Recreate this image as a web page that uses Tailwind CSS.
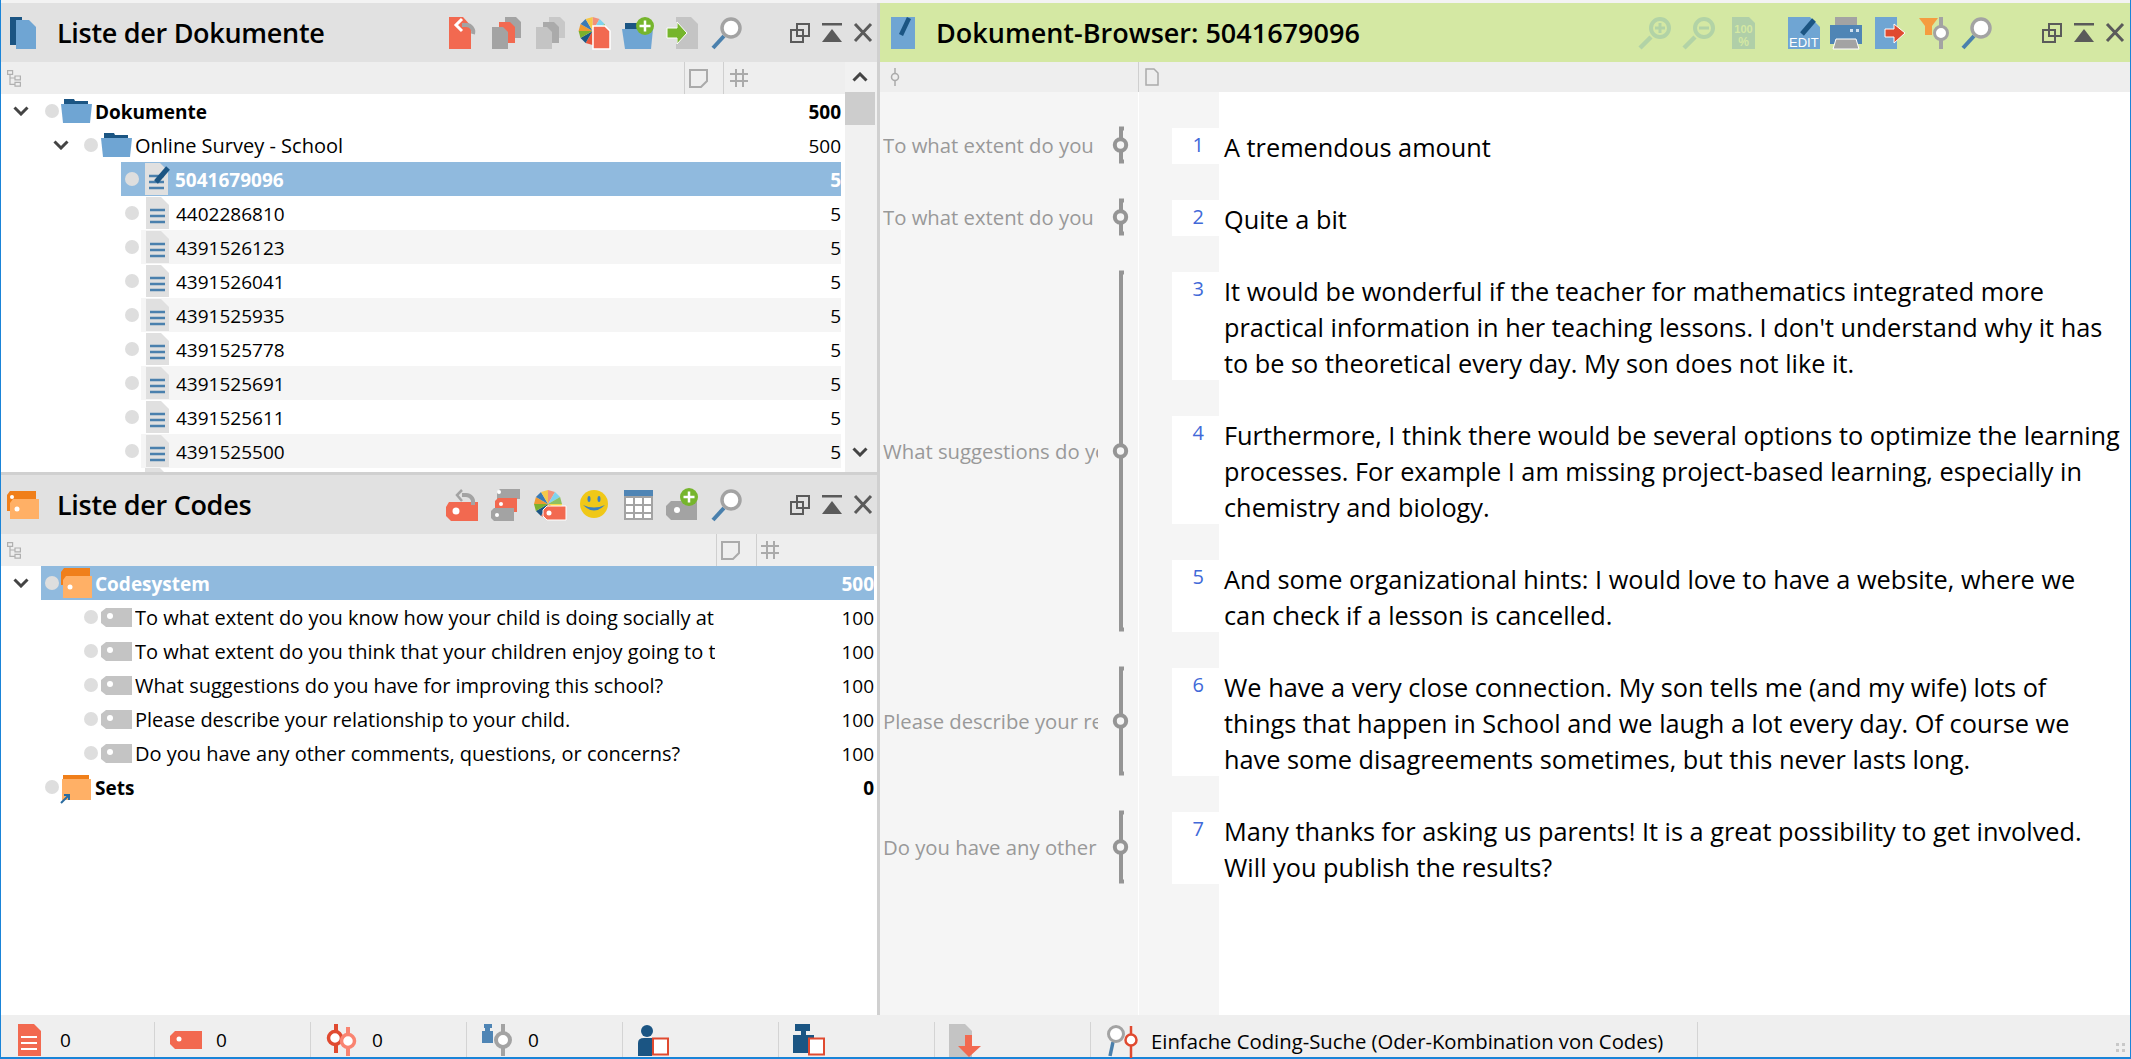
<!DOCTYPE html>
<html lang="de">
<head>
<meta charset="utf-8">
<title>Dokument-Browser</title>
<script src="https://cdn.jsdelivr.net/npm/@tailwindcss/browser@4"></script>
</head>
<body class="overflow-hidden bg-white">

<!-- shared icons -->
<svg class="absolute h-0 w-0">
  <defs>
    <g id="dot"><circle cx="7" cy="7" r="7" fill="#dedede"/></g>
    <g id="pie">
      <polygon points="0,0 0,-14 7,-12.1" fill="#f2907a"/>
      <polygon points="0,0 7,-12.1 12.1,-7" fill="#7fd3ee"/>
      <polygon points="0,0 12.1,-7 14,0" fill="#8fc060"/>
      <polygon points="0,0 14,0 12.1,7" fill="#f5d84a"/>
      <polygon points="0,0 12.1,7 7,12.1" fill="#e8553a"/>
      <polygon points="0,0 7,12.1 0,14" fill="#f5cf20"/>
      <polygon points="0,0 0,14 -7,12.1" fill="#e8553a"/>
      <polygon points="0,0 -7,12.1 -12.1,7" fill="#1b5583"/>
      <polygon points="0,0 -12.1,7 -14,0" fill="#7bb02c"/>
      <polygon points="0,0 -14,0 -12.1,-7" fill="#f09a30"/>
      <polygon points="0,0 -12.1,-7 -7,-12.1" fill="#3a7ab5"/>
      <polygon points="0,0 -7,-12.1 0,-14" fill="#f5c84a"/>
    </g>
    <g id="lens">
      <path d="M12 19 1 31" stroke="#4a80ad" stroke-width="4" fill="none"/>
      <circle cx="19" cy="11" r="9" fill="#fff" stroke="#a3a3a3" stroke-width="3.5"/>
    </g>
    <g id="win-restore" fill="none" stroke="#5a5a5a" stroke-width="2">
      <rect x="7" y="1" width="12" height="12"/>
      <rect x="1" y="7" width="12" height="12" fill="none"/>
    </g>
    <g id="win-up" fill="#5a5a5a">
      <rect x="0" y="0" width="20" height="2.5"/>
      <polygon points="10,6 20,19 0,19"/>
    </g>
    <g id="win-close" stroke="#5a5a5a" stroke-width="3" fill="none">
      <path d="M1 1 17 18M17 1 1 18"/>
    </g>
    <g id="row-chevron">
      <path d="M1.5 1.5 8 8 14.5 1.5" fill="none" stroke="#444" stroke-width="3"/>
    </g>
    <g id="row-folder">
      <path d="M3 0h10l1 2h13v5H3z" fill="#1b5583"/>
      <path d="M0 5h31l-2 19H2z" fill="#6fa5d3"/>
    </g>
    <g id="row-doc">
      <path d="M0 0h15l8 8v24H0z" fill="#e0e0e0"/>
      <path d="M4 13h15M4 19h15M4 25h15" stroke="#4a80ad" stroke-width="2.5"/>
    </g>
    <g id="row-tag">
      <path d="M5 0H31V19H5L0 15V4z" fill="#c4c4c4"/>
      <circle cx="9" cy="8" r="3" fill="#fff"/>
    </g>
    <g id="sub-tree" fill="none" stroke="#b0b0b0" stroke-width="1.2">
      <path d="M.6.6h5v3.800h-5zM8 6h5.400v3.800H8zM8 12.400h5.400v3.800H8zM3 4.400v10h5M3 8h5"/>
    </g>
    <g id="sub-note" fill="none" stroke="#aaa" stroke-width="2">
      <path d="M1 1h17v11l-6 6H1z"/>
    </g>
    <g id="sub-hash" stroke="#aaa" stroke-width="2" fill="none">
      <path d="M6 0v18M13 0v18M0 5h18M0 12h18"/>
    </g>
  </defs>
</svg>

<div class="flex h-[1059px] w-[2131px] flex-col border-x border-b-2 border-[#1a84d8] font-['Open_Sans',sans-serif] text-black">
  <div class="h-[3px] shrink-0 bg-[#f3f3f3]"></div>

  <div class="flex min-h-0 flex-1">
    <!-- left column -->
    <div class="flex w-[876px] shrink-0 flex-col">

      <!-- Liste der Dokumente -->
      <section class="flex h-[469px] shrink-0 flex-col overflow-hidden">
        <header class="flex h-[59px] shrink-0 items-center bg-[#e1e1e1]">
          <svg class="ml-[9px] h-8 w-[26px] shrink-0 overflow-visible">
            <path d="M0 0h12v28H0z" fill="#1b5583"/>
            <path d="M6 3h13l7 7v22H6z" fill="#6fa5d3"/>
          </svg>
          <h1 class="ml-[21px] w-[391px] pt-[2px] text-[27px] font-semibold tracking-[-0.3px]">Liste der Dokumente</h1>
          <div class="flex gap-3">
            <svg class="h-8 w-8 overflow-visible">
              <path d="M1 0h14l8 9v23H1z" fill="#f26950"/>
              <path d="M14 8h4a7 7 0 0 1 7 9" fill="none" stroke="#a3a3a3" stroke-width="4"/>
              <path d="M14 2 8 8l6 6" fill="none" stroke="#fff" stroke-width="3"/>
            </svg>
            <svg class="h-8 w-8 overflow-visible">
              <path d="M13 0h11l5 5v16H13z" fill="#a3a3a3"/>
              <path d="M7 5h11l5 5v16H7z" fill="#f26950"/>
              <path d="M0 10h11l5 5v17H0z" fill="#a3a3a3"/>
            </svg>
            <svg class="h-8 w-8 overflow-visible">
              <path d="M13 0h11l5 5v16H13z" fill="#c8c8c8"/>
              <path d="M7 5h11l5 5v16H7z" fill="#aaa"/>
              <path d="M0 10h11l5 5v17H0z" fill="#c4c4c4"/>
            </svg>
            <svg class="h-8 w-8 overflow-visible">
              <use href="#pie" x="12.6" y="14"/>
              <path d="M13 9h12l5 5v18H13z" fill="#f26950" stroke="#fff" stroke-width="1.5"/>
            </svg>
            <svg class="h-8 w-8 overflow-visible">
              <path d="M1 6h12v6H1z" fill="#1b5583"/>
              <path d="M-2 12h31l-2 20H1z" fill="#6fa5d3"/>
              <circle cx="21" cy="9" r="9" fill="#76b52c"/>
              <path d="M21 3.500v11M15.500 9h11" stroke="#fff" stroke-width="2.500"/>
            </svg>
            <svg class="h-8 w-8 overflow-visible">
              <path d="M8 0h15l7 7v25H8z" fill="#c4c4c4"/>
              <path d="M-1 11h10V5l10 11-10 11v-6H-1z" fill="#76b52c" stroke="#fff" stroke-width="1"/>
            </svg>
            <svg class="h-8 w-8 overflow-visible"><use href="#lens"/></svg>
          </div>
          <div class="ml-[46px] flex gap-3">
            <svg class="h-5 w-5 overflow-visible"><use href="#win-restore"/></svg>
            <svg class="h-5 w-5 overflow-visible"><use href="#win-up"/></svg>
            <svg class="h-5 w-5 overflow-visible"><use href="#win-close"/></svg>
          </div>
        </header>

        <div class="flex min-h-0 flex-1">
          <div class="flex min-w-0 flex-1 flex-col overflow-hidden">
            <div class="flex h-8 shrink-0 bg-[#eeeeee]">
              <div class="flex w-[684px] items-center border-r border-[#cfcfcf] pl-[6px]"><svg class="h-[17px] w-[15px]"><use href="#sub-tree"/></svg></div>
              <div class="flex w-[39px] items-center border-r border-[#cfcfcf] pl-1"><svg class="h-[19px] w-[19px]"><use href="#sub-note"/></svg></div>
              <div class="flex items-center pl-[6px]"><svg class="h-[18px] w-[18px]"><use href="#sub-hash"/></svg></div>
            </div>

            <div class="pr-1 text-[19px]">
              <div class="flex h-[34px] items-center pl-3">
                <svg class="h-[10px] w-4"><use href="#row-chevron"/></svg>
                <svg class="ml-4 h-[14px] w-[14px]"><use href="#dot"/></svg>
                <svg class="ml-[2px] h-6 w-[31px]"><use href="#row-folder"/></svg>
                <span class="ml-[3px] pt-[2px] font-bold">Dokumente</span>
                <span class="ml-auto pt-[2px] font-bold">500</span>
              </div>
              <div class="flex h-[34px] items-center pl-[52px]">
                <svg class="h-[10px] w-4"><use href="#row-chevron"/></svg>
                <svg class="ml-[15px] h-[14px] w-[14px]"><use href="#dot"/></svg>
                <svg class="ml-[3px] h-6 w-[31px]"><use href="#row-folder"/></svg>
                <span class="ml-[3px] pt-[2px] text-[20px]">Online Survey - School</span>
                <span class="ml-auto pt-[2px]">500</span>
              </div>
              <div class="ml-[120px] flex h-[34px] items-center bg-[#90bade] pl-1 font-bold text-white">
                <svg class="h-[14px] w-[14px]"><use href="#dot"/></svg>
                <svg class="ml-[6px] h-8 w-[23px] overflow-visible">
                  <use href="#row-doc"/>
                  <path d="M11 19 23 5" stroke="#1b5583" stroke-width="5"/>
                </svg>
                <span class="ml-[7px] pt-[2px]">5041679096</span>
                <span class="ml-auto pt-[2px]">5</span>
              </div>
              <div class="flex h-[34px] items-center pl-[124px]">
                <svg class="h-[14px] w-[14px]"><use href="#dot"/></svg>
                <div class="ml-[2px] flex h-full flex-1 items-center pl-[5px]"><svg class="h-8 w-[23px]"><use href="#row-doc"/></svg><span class="ml-[7px] pt-[2px]">4402286810</span><span class="ml-auto pt-[2px]">5</span></div>
              </div>
              <div class="flex h-[34px] items-center pl-[124px]">
                <svg class="h-[14px] w-[14px]"><use href="#dot"/></svg>
                <div class="ml-[2px] flex h-full flex-1 items-center bg-[#f5f5f5] pl-[5px]"><svg class="h-8 w-[23px]"><use href="#row-doc"/></svg><span class="ml-[7px] pt-[2px]">4391526123</span><span class="ml-auto pt-[2px]">5</span></div>
              </div>
              <div class="flex h-[34px] items-center pl-[124px]">
                <svg class="h-[14px] w-[14px]"><use href="#dot"/></svg>
                <div class="ml-[2px] flex h-full flex-1 items-center pl-[5px]"><svg class="h-8 w-[23px]"><use href="#row-doc"/></svg><span class="ml-[7px] pt-[2px]">4391526041</span><span class="ml-auto pt-[2px]">5</span></div>
              </div>
              <div class="flex h-[34px] items-center pl-[124px]">
                <svg class="h-[14px] w-[14px]"><use href="#dot"/></svg>
                <div class="ml-[2px] flex h-full flex-1 items-center bg-[#f5f5f5] pl-[5px]"><svg class="h-8 w-[23px]"><use href="#row-doc"/></svg><span class="ml-[7px] pt-[2px]">4391525935</span><span class="ml-auto pt-[2px]">5</span></div>
              </div>
              <div class="flex h-[34px] items-center pl-[124px]">
                <svg class="h-[14px] w-[14px]"><use href="#dot"/></svg>
                <div class="ml-[2px] flex h-full flex-1 items-center pl-[5px]"><svg class="h-8 w-[23px]"><use href="#row-doc"/></svg><span class="ml-[7px] pt-[2px]">4391525778</span><span class="ml-auto pt-[2px]">5</span></div>
              </div>
              <div class="flex h-[34px] items-center pl-[124px]">
                <svg class="h-[14px] w-[14px]"><use href="#dot"/></svg>
                <div class="ml-[2px] flex h-full flex-1 items-center bg-[#f5f5f5] pl-[5px]"><svg class="h-8 w-[23px]"><use href="#row-doc"/></svg><span class="ml-[7px] pt-[2px]">4391525691</span><span class="ml-auto pt-[2px]">5</span></div>
              </div>
              <div class="flex h-[34px] items-center pl-[124px]">
                <svg class="h-[14px] w-[14px]"><use href="#dot"/></svg>
                <div class="ml-[2px] flex h-full flex-1 items-center pl-[5px]"><svg class="h-8 w-[23px]"><use href="#row-doc"/></svg><span class="ml-[7px] pt-[2px]">4391525611</span><span class="ml-auto pt-[2px]">5</span></div>
              </div>
              <div class="flex h-[34px] items-center pl-[124px]">
                <svg class="h-[14px] w-[14px]"><use href="#dot"/></svg>
                <div class="ml-[2px] flex h-full flex-1 items-center bg-[#f5f5f5] pl-[5px]"><svg class="h-8 w-[23px]"><use href="#row-doc"/></svg><span class="ml-[7px] pt-[2px]">4391525500</span><span class="ml-auto pt-[2px]">5</span></div>
              </div>
              <div class="flex h-[34px] pl-[144px]"><svg class="h-8 w-[23px]"><use href="#row-doc"/></svg></div>
            </div>
          </div>

          <!-- scrollbar -->
          <div class="flex w-8 shrink-0 flex-col bg-[#f1f1f1]">
            <div class="flex h-[30px] items-center justify-center pr-[2px]"><svg class="h-[10px] w-4 rotate-180"><use href="#row-chevron"/></svg></div>
            <div class="h-[33px] w-[30px] bg-[#cdcdcd]"></div>
            <div class="mt-auto flex h-[30px] items-center justify-center pb-[10px] pr-[2px]"><svg class="h-[10px] w-4"><use href="#row-chevron"/></svg></div>
          </div>
        </div>
      </section>

      <div class="h-[3px] shrink-0 bg-[#d0d0d0]"></div>

      <!-- Liste der Codes -->
      <section class="flex min-h-0 flex-1 flex-col bg-white">
        <header class="flex h-[59px] shrink-0 items-center bg-[#e1e1e1]">
          <svg class="ml-[6px] h-[28px] w-8 shrink-0 overflow-visible">
            <path d="M3 0h26v20H0V4z" fill="#f07f1a"/>
            <path d="M6 8h26v20H3V12z" fill="#ffb066"/>
            <circle cx="5" cy="6" r="2" fill="#fff"/>
            <circle cx="10" cy="18" r="2.500" fill="#fff"/>
          </svg>
          <h2 class="ml-[18px] w-[391px] pt-[2px] text-[27px] font-semibold tracking-[-0.3px]">Liste der Codes</h2>
          <div class="flex gap-3">
            <svg class="h-8 w-8 overflow-visible">
              <path d="M1 13h29v19H3l-5-5V18z" fill="#f26950"/>
              <circle cx="8" cy="22" r="3.500" fill="#fff"/>
              <path d="M14 6h4a7 7 0 0 1 7 8v2" fill="none" stroke="#a3a3a3" stroke-width="4"/>
              <path d="M14 1 9 6l5 6" fill="none" stroke="#a3a3a3" stroke-width="2.500"/>
            </svg>
            <svg class="h-8 w-8 overflow-visible">
              <path d="M8 0h20v10H5V3z" fill="#a3a3a3"/>
              <path d="M6 9h19v14H3V12z" fill="#f26950"/>
              <circle cx="7" cy="3" r="2" fill="#fff"/>
              <circle cx="9" cy="15" r="2" fill="#fff"/>
              <path d="M2 19h20v13H2l-3-3v-7z" fill="#a3a3a3"/>
              <circle cx="5" cy="26" r="2" fill="#fff"/>
            </svg>
            <svg class="h-8 w-8 overflow-visible">
              <use href="#pie" x="12" y="15"/>
              <path d="M11 17h19v14H11l-4-4v-6z" fill="#f26950" stroke="#fff" stroke-width="1"/>
              <circle cx="13" cy="24" r="2.500" fill="#fff"/>
            </svg>
            <svg class="h-8 w-8 overflow-visible">
              <circle cx="14" cy="15" r="14" fill="#f0c818"/>
              <ellipse cx="9" cy="10" rx="1.500" ry="3" fill="#3a80c0"/>
              <ellipse cx="19" cy="10" rx="1.500" ry="3" fill="#3a80c0"/>
              <path d="M3 16q11 11 22 0-11 5-22 0z" fill="#3a80c0"/>
            </svg>
            <svg class="h-8 w-8 overflow-visible">
              <rect y="1" width="29" height="30" fill="#a3a3a3"/>
              <rect y="1" width="29" height="6" fill="#4f85b5"/>
              <path d="M2 9h7v6H2zM11 9h7v6h-7zM20 9h7v6h-7zM2 17h7v6H2zM11 17h7v6h-7zM20 17h7v6h-7zM2 25h7v4H2zM11 25h7v4h-7zM20 25h7v4h-7z" fill="#fff"/>
            </svg>
            <svg class="h-8 w-8 overflow-visible">
              <path d="M3 12h26v19H3l-5-5v-9z" fill="#a3a3a3"/>
              <circle cx="9" cy="21" r="3" fill="#fff"/>
              <circle cx="21" cy="8" r="9" fill="#76b52c"/>
              <path d="M21 2.500v11M15.500 8h11" stroke="#fff" stroke-width="2.500"/>
            </svg>
            <svg class="h-8 w-8 overflow-visible"><use href="#lens"/></svg>
          </div>
          <div class="ml-[46px] flex gap-3">
            <svg class="h-5 w-5 overflow-visible"><use href="#win-restore"/></svg>
            <svg class="h-5 w-5 overflow-visible"><use href="#win-up"/></svg>
            <svg class="h-5 w-5 overflow-visible"><use href="#win-close"/></svg>
          </div>
        </header>

        <div class="flex h-8 shrink-0 bg-[#eeeeee]">
          <div class="flex w-[716px] items-center border-r border-[#cfcfcf] pl-[6px]"><svg class="h-[17px] w-[15px]"><use href="#sub-tree"/></svg></div>
          <div class="flex w-[40px] items-center border-r border-[#cfcfcf] pl-1"><svg class="h-[19px] w-[19px]"><use href="#sub-note"/></svg></div>
          <div class="flex items-center pl-1"><svg class="h-[18px] w-[18px]"><use href="#sub-hash"/></svg></div>
        </div>

        <div class="pr-[3px] text-[19px]">
          <div class="flex h-[34px] items-center pl-3">
            <svg class="h-[10px] w-4"><use href="#row-chevron"/></svg>
            <div class="ml-3 flex h-full flex-1 items-center bg-[#90bade] pl-1 font-bold text-white">
              <svg class="h-[14px] w-[14px]"><use href="#dot"/></svg>
              <svg class="ml-[2px] h-8 w-[31px] overflow-visible">
                <path d="M3 1h26v17H0V5z" fill="#f07f1a"/>
                <path d="M5 9h26v22H2V13z" fill="#ffb066"/>
                <circle cx="9" cy="20" r="2.500" fill="#fff"/>
              </svg>
              <span class="ml-[3px] pt-[2px]">Codesystem</span>
              <span class="ml-auto pt-[2px]">500</span>
            </div>
          </div>
          <div class="flex h-[34px] items-center pl-[83px]">
            <svg class="h-[14px] w-[14px]"><use href="#dot"/></svg>
            <svg class="ml-[3px] h-[19px] w-[31px]"><use href="#row-tag"/></svg>
            <span class="ml-[3px] w-[580px] overflow-hidden whitespace-nowrap pt-[2px] text-[20px]">To what extent do you know how your child is doing socially at</span>
            <span class="ml-auto pt-[2px]">100</span>
          </div>
          <div class="flex h-[34px] items-center pl-[83px]">
            <svg class="h-[14px] w-[14px]"><use href="#dot"/></svg>
            <svg class="ml-[3px] h-[19px] w-[31px]"><use href="#row-tag"/></svg>
            <span class="ml-[3px] w-[580px] overflow-hidden whitespace-nowrap pt-[2px] text-[20px]">To what extent do you think that your children enjoy going to t</span>
            <span class="ml-auto pt-[2px]">100</span>
          </div>
          <div class="flex h-[34px] items-center pl-[83px]">
            <svg class="h-[14px] w-[14px]"><use href="#dot"/></svg>
            <svg class="ml-[3px] h-[19px] w-[31px]"><use href="#row-tag"/></svg>
            <span class="ml-[3px] w-[580px] overflow-hidden whitespace-nowrap pt-[2px] text-[20px]">What suggestions do you have for improving this school?</span>
            <span class="ml-auto pt-[2px]">100</span>
          </div>
          <div class="flex h-[34px] items-center pl-[83px]">
            <svg class="h-[14px] w-[14px]"><use href="#dot"/></svg>
            <svg class="ml-[3px] h-[19px] w-[31px]"><use href="#row-tag"/></svg>
            <span class="ml-[3px] w-[580px] overflow-hidden whitespace-nowrap pt-[2px] text-[20px]">Please describe your relationship to your child.</span>
            <span class="ml-auto pt-[2px]">100</span>
          </div>
          <div class="flex h-[34px] items-center pl-[83px]">
            <svg class="h-[14px] w-[14px]"><use href="#dot"/></svg>
            <svg class="ml-[3px] h-[19px] w-[31px]"><use href="#row-tag"/></svg>
            <span class="ml-[3px] w-[580px] overflow-hidden whitespace-nowrap pt-[2px] text-[20px]">Do you have any other comments, questions, or concerns?</span>
            <span class="ml-auto pt-[2px]">100</span>
          </div>
          <div class="flex h-[34px] items-center pl-11">
            <svg class="h-[14px] w-[14px]"><use href="#dot"/></svg>
            <svg class="ml-[2px] h-8 w-[31px] overflow-visible">
              <path d="M2 4h26v6H2z" fill="#f07f1a"/>
              <path d="M1 8h29v21H1z" fill="#ffb066"/>
              <path d="M0 32 8 24M3 24h5v5" fill="none" stroke="#2a6ca0" stroke-width="2"/>
            </svg>
            <span class="ml-[3px] pt-[2px] font-bold">Sets</span>
            <span class="ml-auto pt-[2px] font-bold">0</span>
          </div>
        </div>
      </section>
    </div>

    <div class="w-[3px] shrink-0 bg-[#d0d0d0]"></div>

    <!-- Dokument-Browser -->
    <section class="flex min-w-0 flex-1 flex-col">
      <header class="flex h-[59px] shrink-0 items-center bg-[#d4e8a3]">
        <svg class="ml-[11px] h-8 w-6 shrink-0 overflow-visible">
          <path d="M0 0h24v32H0z" fill="#6fa5d3"/>
          <path d="M10 18 18 1" stroke="#1b5583" stroke-width="4.500"/>
        </svg>
        <h2 class="ml-[21px] w-[704px] pt-[2px] text-[27px] font-semibold">Dokument-Browser: 5041679096</h2>
        <div class="flex gap-3">
          <svg class="h-8 w-8 overflow-visible">
            <path d="M11 20 0 31" stroke="#b2d3a6" stroke-width="4.500"/>
            <circle cx="20" cy="11" r="9" fill="#d4e8a3" stroke="#b2d3a6" stroke-width="4"/>
            <path d="M20 6v10M15 11h10" stroke="#b2d3a6" stroke-width="3"/>
          </svg>
          <svg class="h-8 w-8 overflow-visible">
            <path d="M11 20 0 31" stroke="#b2d3a6" stroke-width="4.500"/>
            <circle cx="20" cy="11" r="9" fill="#d4e8a3" stroke="#b2d3a6" stroke-width="4"/>
            <path d="M15 11h10" stroke="#b2d3a6" stroke-width="3"/>
          </svg>
          <svg class="h-8 w-8 overflow-visible">
            <path d="M4 0h17l6 6v26H4z" fill="#b0cfa8"/>
            <text x="15.500" y="16" text-anchor="middle" font-family="Liberation Sans" font-size="11" font-weight="700" fill="#d4e8a3">100</text>
            <text x="15.500" y="29" text-anchor="middle" font-family="Liberation Sans" font-size="12" font-weight="700" fill="#d4e8a3">%</text>
          </svg>
        </div>
        <div class="ml-[26px] flex gap-3">
          <svg class="h-8 w-8 overflow-visible">
            <path d="M2 0h22l10 10v22H2z" fill="#6fa5d3"/>
            <path d="M16 17 28 3" stroke="#1b5583" stroke-width="5"/>
            <text x="3" y="30" font-family="Liberation Sans" font-size="13" fill="#fff">EDIT</text>
          </svg>
          <svg class="h-8 w-8 overflow-visible">
            <rect x="5" width="22" height="8" fill="#a3a3a3"/>
            <rect y="8" width="32" height="19" fill="#4f85b5"/>
            <path d="M20 12h3v3h-3zM26 12h3v3h-3z" fill="#d0e0ee"/>
            <path d="M6 22h20l3 10H3z" fill="#a3a3a3" stroke="#fff" stroke-width="1"/>
          </svg>
          <svg class="h-8 w-8 overflow-visible">
            <rect x="1" width="22" height="32" fill="#6fa5d3"/>
            <path d="M11 12h9V7l11 9-11 10v-6h-9z" fill="#e04a30" stroke="#fff" stroke-width="1"/>
          </svg>
          <svg class="h-8 w-8 overflow-visible">
            <path d="M1 1h19l-6 8v9h-7V9z" fill="#f59c40"/>
            <path d="M23 0v32" stroke="#a3a3a3" stroke-width="4"/>
            <circle cx="23" cy="16" r="6.500" fill="#fff" stroke="#a3a3a3" stroke-width="3"/>
          </svg>
          <svg class="h-8 w-8 overflow-visible"><use href="#lens"/></svg>
        </div>
        <div class="ml-[48px] flex gap-3">
          <svg class="h-5 w-5 overflow-visible"><use href="#win-restore"/></svg>
          <svg class="h-5 w-5 overflow-visible"><use href="#win-up"/></svg>
          <svg class="h-5 w-5 overflow-visible"><use href="#win-close"/></svg>
        </div>
      </header>

      <div class="flex h-[30px] shrink-0 bg-[#eeeeee]">
        <div class="flex w-[259px] items-center justify-start border-r border-[#cfcfcf] pl-[11px]">
          <svg class="h-[18px] w-[8px] overflow-visible" fill="none" stroke="#aaa" stroke-width="1.500"><path d="M4 0v18"/><circle cx="4" cy="9" r="3.500" fill="#eee"/></svg>
        </div>
        <div class="flex items-center pl-[6px]">
          <svg class="h-[18px] w-[14px]" fill="none" stroke="#aaa" stroke-width="1.500"><path d="M1 1h8l4 4v12H1z"/></svg>
        </div>
      </div>

      <div class="flex min-h-0 flex-1">
        <!-- code stripes -->
        <div class="w-[259px] shrink-0 space-y-9 border-r border-white bg-[#f5f5f5] pt-[35px] text-[20.3px] text-[#999999]">
          <div class="flex h-9 items-center justify-between pl-[3px]">
            <span class="w-[215px] overflow-hidden whitespace-nowrap">To what extent do you</span>
            <svg class="mr-1 h-9 w-6 overflow-visible" fill="none" stroke="#959595"><path d="M14 1.500h-3v33h3" stroke-width="4"/><circle cx="10.500" cy="18" r="5.700" fill="#f5f5f5" stroke-width="4"/></svg>
          </div>
          <div class="flex h-9 items-center justify-between pl-[3px]">
            <span class="w-[215px] overflow-hidden whitespace-nowrap">To what extent do you</span>
            <svg class="mr-1 h-9 w-6 overflow-visible" fill="none" stroke="#959595"><path d="M14 1.500h-3v33h3" stroke-width="4"/><circle cx="10.500" cy="18" r="5.700" fill="#f5f5f5" stroke-width="4"/></svg>
          </div>
          <div class="flex h-[360px] items-center justify-between pl-[3px]">
            <span class="w-[215px] overflow-hidden whitespace-nowrap">What suggestions do yo</span>
            <svg class="mr-1 h-[360px] w-6 overflow-visible" fill="none" stroke="#959595"><path d="M14 1.500h-3v357h3" stroke-width="4"/><circle cx="10.500" cy="180" r="5.700" fill="#f5f5f5" stroke-width="4"/></svg>
          </div>
          <div class="flex h-[108px] items-center justify-between pl-[3px]">
            <span class="w-[215px] overflow-hidden whitespace-nowrap">Please describe your re</span>
            <svg class="mr-1 h-[108px] w-6 overflow-visible" fill="none" stroke="#959595"><path d="M14 1.500h-3v105h3" stroke-width="4"/><circle cx="10.500" cy="54" r="5.700" fill="#f5f5f5" stroke-width="4"/></svg>
          </div>
          <div class="flex h-[72px] items-center justify-between pl-[3px]">
            <span class="w-[215px] overflow-hidden whitespace-nowrap">Do you have any other</span>
            <svg class="mr-1 h-[72px] w-6 overflow-visible" fill="none" stroke="#959595"><path d="M14 1.500h-3v69h3" stroke-width="4"/><circle cx="10.500" cy="36" r="5.700" fill="#f5f5f5" stroke-width="4"/></svg>
          </div>
        </div>

        <!-- paragraph numbers -->
        <div class="w-20 shrink-0 space-y-9 bg-[#f5f5f5] pl-[33px] pt-9 text-right text-[20px] leading-[34px] text-[#4169d8]">
          <div class="h-9 bg-white pr-[15px]">1</div>
          <div class="h-9 bg-white pr-[15px]">2</div>
          <div class="h-[108px] bg-white pr-[15px]">3</div>
          <div class="h-[108px] bg-white pr-[15px]">4</div>
          <div class="h-[72px] bg-white pr-[15px]">5</div>
          <div class="h-[108px] bg-white pr-[15px]">6</div>
          <div class="h-[72px] bg-white pr-[15px]">7</div>
        </div>

        <!-- text -->
        <div class="min-w-0 flex-1 space-y-9 bg-white pl-[5px] pt-[37px] text-[25.3px] leading-[36px] whitespace-nowrap">
          <p>A tremendous amount</p>
          <p>Quite a bit</p>
          <p>It would be wonderful if the teacher for mathematics integrated more<br>practical information in her teaching lessons. I don't understand why it has<br>to be so theoretical every day. My son does not like it.</p>
          <p>Furthermore, I think there would be several options to optimize the learning<br>processes. For example I am missing project-based learning, especially in<br>chemistry and biology.</p>
          <p>And some organizational hints: I would love to have a website, where we<br>can check if a lesson is cancelled.</p>
          <p>We have a very close connection. My son tells me (and my wife) lots of<br>things that happen in School and we laugh a lot every day. Of course we<br>have some disagreements sometimes, but this never lasts long.</p>
          <p>Many thanks for asking us parents! It is a great possibility to get involved.<br>Will you publish the results?</p>
        </div>
      </div>
    </section>
  </div>

  <!-- status bar -->
  <footer class="flex h-[42px] shrink-0 items-end bg-[#efefef] text-[19px]">
    <div class="flex h-[35px] w-[154px] items-center border-r border-[#d4d4d4] pl-[14px]">
      <svg class="h-[34px] w-[45px] shrink-0 overflow-visible"><path d="M3 1h16l7 7v25H3z" fill="#f26950"/><path d="M6 14h16M6 20h16M6 26h16" stroke="#fff" stroke-width="2"/></svg><span class="pt-[2px]">0</span>
    </div>
    <div class="flex h-[35px] w-[156px] items-center border-r border-[#d4d4d4] pl-4">
      <svg class="h-[34px] w-[45px] shrink-0 overflow-visible"><path d="M4 8h27v18H4l-5-5V13z" fill="#f26950"/><circle cx="8" cy="16" r="2.500" fill="#fff"/></svg><span class="pt-[2px]">0</span>
    </div>
    <div class="flex h-[35px] w-[156px] items-center border-r border-[#d4d4d4] pl-4">
      <svg class="h-[34px] w-[45px] shrink-0 overflow-visible" fill="none"><path d="M9 1v29" stroke="#e04a30" stroke-width="4"/><circle cx="8" cy="15" r="6.500" fill="#fff" stroke="#e04a30" stroke-width="3.500"/><path d="M21 4v29" stroke="#f98471" stroke-width="4"/><circle cx="21" cy="18" r="6.500" fill="#fff" stroke="#f98471" stroke-width="3.500"/></svg><span class="pt-[2px]">0</span>
    </div>
    <div class="flex h-[35px] w-[156px] items-center border-r border-[#d4d4d4] pl-4">
      <svg class="h-[34px] w-[45px] shrink-0 overflow-visible" fill="none"><path d="M1 1h8v4H7v3h3v12H-1V8h3V5H1z" fill="#4f85b5"/><path d="M20 1v32" stroke="#a3a3a3" stroke-width="4"/><circle cx="20" cy="17" r="7" fill="#fff" stroke="#a3a3a3" stroke-width="4"/></svg><span class="pt-[2px]">0</span>
    </div>
    <div class="flex h-[35px] w-[156px] items-center border-r border-[#d4d4d4] pl-4">
      <svg class="h-[34px] w-[45px] shrink-0 overflow-visible"><circle cx="8" cy="8" r="6" fill="#1b5583"/><path d="M-1 33V20q0-5 6-5h8v18z" fill="#1b5583"/><rect x="14" y="15.500" width="15" height="16" fill="#fff" stroke="#e04a30" stroke-width="2"/></svg>
    </div>
    <div class="flex h-[35px] w-[156px] items-center border-r border-[#d4d4d4] pl-4">
      <svg class="h-[34px] w-[45px] shrink-0 overflow-visible"><path d="M0 1h15v7h-4v4h8v18H-2V12h8V8H0z" fill="#1b5583"/><rect x="14" y="15.500" width="15" height="16" fill="#fff" stroke="#e04a30" stroke-width="2"/></svg>
    </div>
    <div class="flex h-[35px] w-[156px] items-center border-r border-[#d4d4d4] pl-4">
      <svg class="h-[34px] w-[45px] shrink-0 overflow-visible"><path d="M-2 1h16l7 7v26H-2z" fill="#c4c4c4"/><path d="M14 12h7v11h9l-12 11-11-11h7z" fill="#f26950"/></svg>
    </div>
    <div class="flex h-[35px] w-[607px] items-center border-r border-[#d4d4d4] pl-4">
      <svg class="h-[34px] w-[44px] shrink-0 overflow-visible" fill="none"><path d="M6 19 3 33" stroke="#4a80ad" stroke-width="3.500"/><circle cx="9" cy="11" r="7.500" fill="#fff" stroke="#a3a3a3" stroke-width="3"/><path d="M24 3v32" stroke="#e04a30" stroke-width="2.500"/><circle cx="24" cy="17" r="5.500" fill="#fff" stroke="#e04a30" stroke-width="2.500"/></svg>
      <span class="whitespace-nowrap pt-[3px] text-[20.3px]">Einfache Coding-Suche (Oder-Kombination von Codes)</span>
    </div>
    <svg class="mb-[3px] ml-auto mr-[3px] h-3 w-3" fill="#c8c8c8">
      <path d="M1 1h3v3H1zM7 1h3v3H7zM1 7h3v3H1zM7 7h3v3H7z"/>
    </svg>
  </footer>
</div>
</body>
</html>
